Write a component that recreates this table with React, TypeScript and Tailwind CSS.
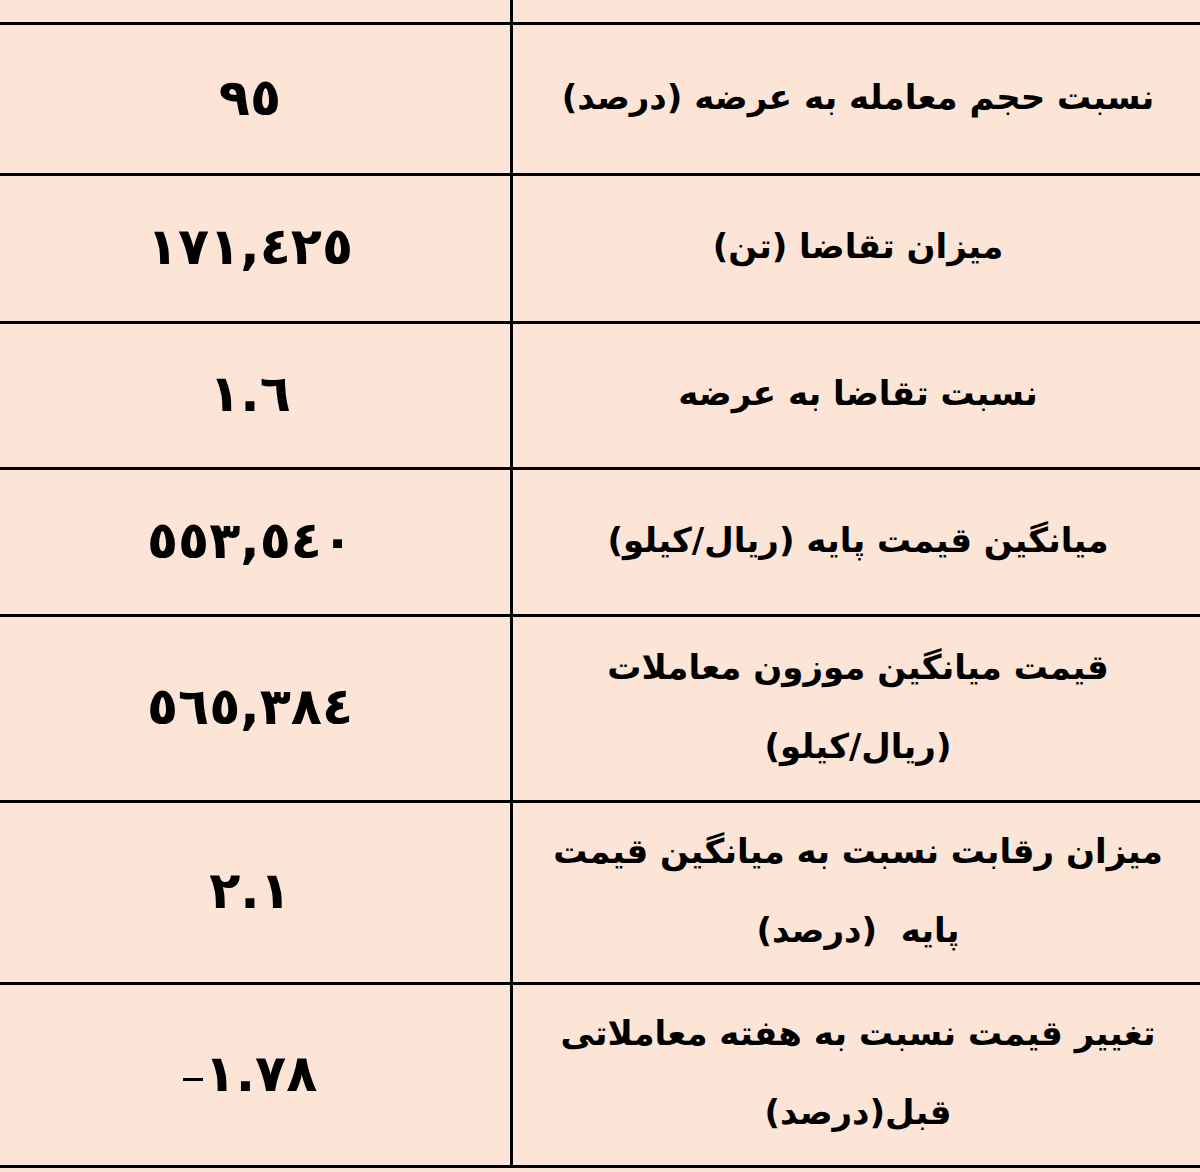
const rows: { value: string; minus?: boolean; label: string[]; h: string }[] = [
  { value: "٩٥", label: ["نسبت حجم معامله به عرضه (درصد)"], h: "h-[151px]" },
  { value: "١٧١,٤٢٥", label: ["میزان تقاضا (تن)"], h: "h-[148px]" },
  { value: "١.٦", label: ["نسبت تقاضا به عرضه"], h: "h-[146px]" },
  { value: "٥٥٣,٥٤٠", label: ["میانگین قیمت پایه (ریال/کیلو)"], h: "h-[147px]" },
  { value: "٥٦٥,٣٨٤", label: ["قیمت میانگین موزون معاملات", "(ریال/کیلو)"], h: "h-[186px]" },
  { value: "٢.١", label: ["میزان رقابت نسبت به میانگین قیمت", "پایه  (درصد)"], h: "h-[182px]" },
  { value: "١.٧٨", minus: true, label: ["تغییر قیمت نسبت به هفته معاملاتی", "قبل(درصد)"], h: "h-[183px]" },
];

export default function App() {
  return (
    <div className="w-[1200px] h-[1172px] overflow-hidden bg-[#fce4d7] font-['DejaVu_Sans',sans-serif] font-bold text-black">
      <div className="flex h-[25px] border-b-[3px] border-black">
        <div className="w-[513px] border-r-[3px] border-black" />
        <div className="flex-1" />
      </div>
      {rows.map((r, i) => (
        <div key={i} className={`flex ${r.h} border-b-[3px] border-black`}>
          <div className="flex w-[513px] items-center justify-center border-r-[3px] border-black pr-[10px] pb-1" dir="ltr">
            {r.minus && <span className="mt-[12px] mr-[2px] h-[3px] w-[20px] bg-black" />}
            <span className="text-[51px] leading-none tracking-[1px]" dir="rtl">
              {r.value}
            </span>
          </div>
          <div className="flex flex-1 flex-col items-center justify-center pl-[3px] pb-1" dir="rtl">
            {r.label.map((t, j) => (
              <div key={j} className="text-[34px] leading-[79px] whitespace-pre">
                {t}
              </div>
            ))}
          </div>
        </div>
      ))}
    </div>
  );
}
